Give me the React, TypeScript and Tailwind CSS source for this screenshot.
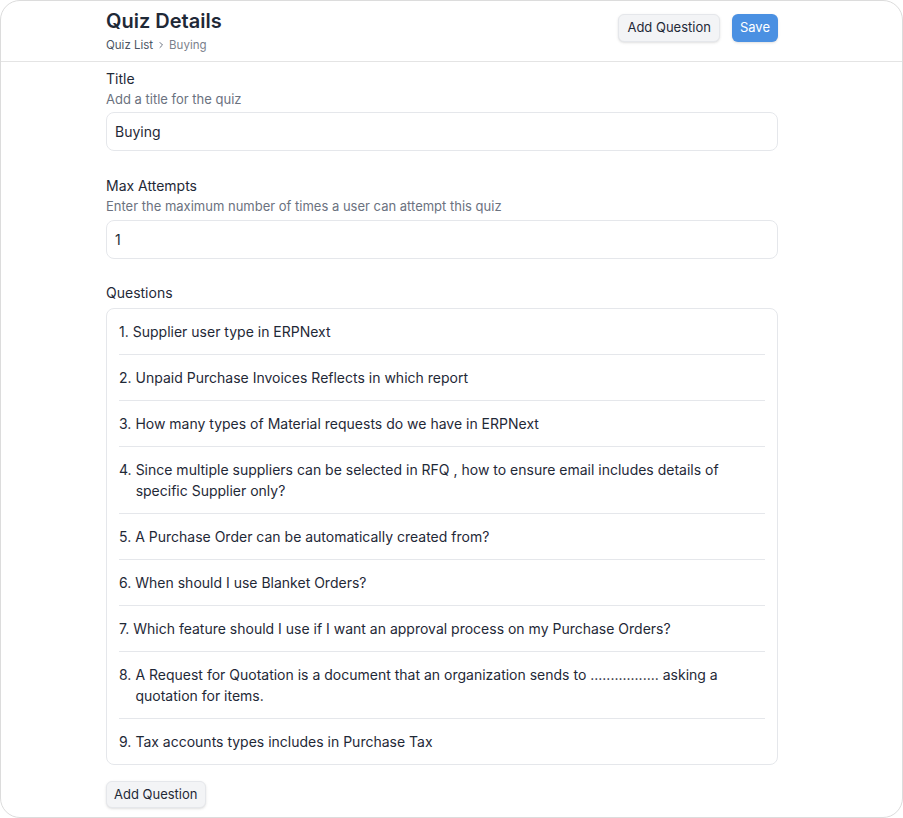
import React from "react";

const questions: string[] = [
  "Supplier user type in ERPNext",
  "Unpaid Purchase Invoices Reflects in which report",
  "How many types of Material requests do we have in ERPNext",
  "Since multiple suppliers can be selected in RFQ , how to ensure email includes details of specific Supplier only?",
  "A Purchase Order can be automatically created from?",
  "When should I use Blanket Orders?",
  "Which feature should I use if I want an approval process on my Purchase Orders?",
  "A Request for Quotation is a document that an organization sends to ................. asking a quotation for items.",
  "Tax accounts types includes in Purchase Tax",
];

export default function App() {
  return (
    <div
      className="w-[903px] h-[818px] bg-white"
      style={{ fontFamily: "Inter, 'Noto Sans', sans-serif" }}
    >
      <div className="w-[903px] h-[818px] border border-[#dcdcdc] rounded-[20px] overflow-hidden bg-white">
        <div className="h-[61px] border-b border-[#e4e4e4] flex items-start">
          <div className="ml-[105px] w-[672px] flex justify-between items-start">
            <div className="pt-[7px]">
              <h1 className="text-[20px] leading-[26px] font-semibold text-[#1f2937]">Quiz Details</h1>
              <div className="mt-[3px] flex items-center text-[11.5px] leading-[16px]">
                <span className="text-[#4b5563]">Quiz List</span>
                <svg className="mx-[4px]" width="8" height="8" viewBox="0 0 8 8" fill="none">
                  <path d="M3 1.5L5.5 4L3 6.5" stroke="#6b7280" strokeWidth="1" strokeLinecap="round" strokeLinejoin="round" />
                </svg>
                <span className="text-[#7b818c]">Buying</span>
              </div>
            </div>
            <div className="flex items-center gap-[12px] pt-[13px]">
              <button className="h-[28px] px-[8px] rounded-[6px] bg-[#f3f4f6] border border-[#e5e7eb] shadow-sm text-[13px] text-[#1f2937]">
                Add Question
              </button>
              <button className="h-[28px] px-[8px] rounded-[6px] bg-[#4a90e2] text-[13px] text-white shadow-sm">
                Save
              </button>
            </div>
          </div>
        </div>

        <div className="ml-[105px] w-[672px]">
          <div className="pt-[7px]">
            <div className="text-[14px] leading-[20px] text-[#1f2937]">Title</div>
            <div className="text-[13px] leading-[20px] text-[#6b7280]">Add a title for the quiz</div>
            <div className="mt-[3px] h-[39px] rounded-[8px] border border-[#e5e7eb] flex items-center px-[8px] text-[14px] text-[#1f2937]">
              Buying
            </div>
          </div>
          <div className="mt-[25px]">
            <div className="text-[14px] leading-[20px] text-[#1f2937]">Max Attempts</div>
            <div className="text-[13px] leading-[20px] text-[#6b7280]">Enter the maximum number of times a user can attempt this quiz</div>
            <div className="mt-[4px] h-[39px] rounded-[8px] border border-[#e5e7eb] flex items-center px-[8px] text-[14px] text-[#1f2937]">
              1
            </div>
          </div>
          <div className="mt-[24px]">
            <div className="text-[14px] leading-[20px] text-[#1f2937]">Questions</div>
            <div className="mt-[5px] rounded-[8px] border border-[#e5e7eb] px-[12px]">
              {questions.map((q, i) => (
                <div
                  key={i}
                  className={`flex py-[12px] text-[14px] leading-[21px] text-[#1f2937] ${i < questions.length - 1 ? "border-b border-[#e5e7eb]" : ""}`}
                >
                  <span className="shrink-0 pr-[4px]">{i + 1}.</span>
                  <span>{q}</span>
                </div>
              ))}
            </div>
          </div>
          <button className="mt-[16px] h-[27px] px-[7px] rounded-[6px] bg-[#f3f4f6] border border-[#e5e7eb] shadow-sm text-[13px] text-[#1f2937]">
            Add Question
          </button>
        </div>
      </div>
    </div>
  );
}
